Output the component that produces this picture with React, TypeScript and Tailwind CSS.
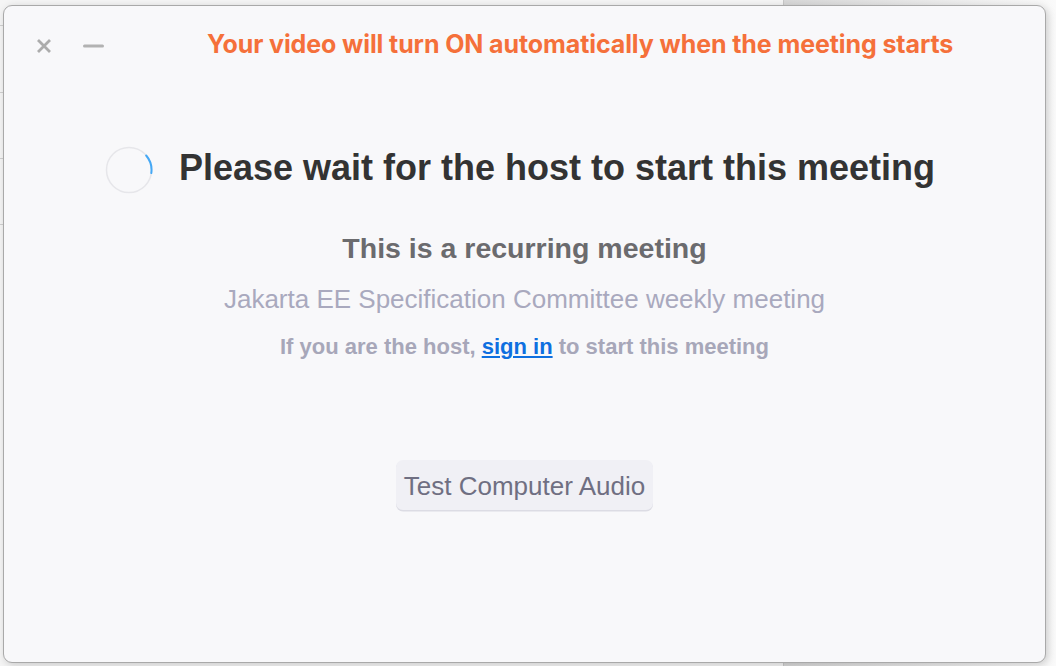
function Spinner() {
  return (
    <svg width="48" height="48" viewBox="0 0 48 48" className="mt-[4px] shrink-0">
      <circle cx="24" cy="24" r="22.5" fill="none" stroke="#e6e6ea" strokeWidth="1.5" />
      <path d="M 41.2 9.5 A 22.5 22.5 0 0 1 46.3 27.1" fill="none" stroke="#45a8f5" strokeWidth="2" strokeLinecap="round" />
    </svg>
  );
}

function CloseIcon() {
  return (
    <svg width="16" height="16" viewBox="0 0 16 16" className="shrink-0">
      <path d="M2 2 L14 14 M14 2 L2 14" stroke="#acacac" strokeWidth="2.8" strokeLinecap="butt" />
    </svg>
  );
}

function MinIcon() {
  return (
    <svg width="21" height="4" viewBox="0 0 21 4" className="shrink-0">
      <path d="M1.5 2 L19.5 2" stroke="#b2b2b2" strokeWidth="3" strokeLinecap="round" />
    </svg>
  );
}

export default function App() {
  return (
    <div className="relative h-[666px] w-[1056px] overflow-hidden bg-[#f4f4f4] font-['Liberation_Sans',Arial,sans-serif]">
      {/* desktop behind the window */}
      <div className="flex h-full">
        <div className="flex w-[784px] flex-col border-r border-[#c8c8c8] bg-[#f5f5f5]">
          <div className="h-[26px] border-b border-[#d0d0d0]" />
          <div className="h-[67px] border-b border-[#d0d0d0]" />
          <div className="h-[66px] border-b border-[#d0d0d0]" />
          <div className="h-[66px] border-b border-[#d0d0d0]" />
        </div>
        <div className="flex-1 bg-gradient-to-r from-[#d8d8d8] to-[#fafafa]" />
      </div>

      {/* meeting window */}
      <div className="absolute left-[3px] top-[5px] flex h-[658px] w-[1043px] flex-col rounded-[9px] border border-[#a9a9a9] bg-[#f8f8fa] shadow-[2px_2px_8px_rgba(0,0,0,0.18)]">
        <div className="mt-[26px] flex h-[25px] items-center pl-[32px]">
          <div className="flex items-center pt-[3px]">
            <CloseIcon />
            <div className="ml-[31px]">
              <MinIcon />
            </div>
          </div>
          <div className="ml-[103px] whitespace-nowrap font-['Inter',sans-serif] text-[25px] font-bold leading-none tracking-[-0.1px] text-[#f5703a]">
            Your video will turn ON automatically when the meeting starts
          </div>
        </div>

        <div className="mt-[85px] flex items-center justify-center gap-[26px] pr-[9px]">
          <Spinner />
          <h1 className="text-[36px] font-bold leading-none text-[#333333]">Please wait for the host to start this meeting</h1>
        </div>

        <div className="mt-[40px] text-center text-[28.5px] font-bold leading-none text-[#6b6b6e]">This is a recurring meeting</div>
        <div className="mt-[23.5px] text-center text-[26px] leading-none text-[#a9a9be]">Jakarta EE Specification Committee weekly meeting</div>
        <div className="mt-[24px] text-center text-[22px] font-bold leading-none text-[#a7a7b9]">
          If you are the host,{" "}
          <a href="#" className="text-[#0e6fe0] underline">
            sign in
          </a>{" "}
          to start this meeting
        </div>

        <div className="mt-[101.5px] flex justify-center">
          <button className="h-[50px] w-[257px] rounded-[7px] bg-[#f0f0f5] pt-[3px] text-[26px] leading-none text-[#6f6f82] shadow-[0_1.5px_0_#dcdce4]">
            Test Computer Audio
          </button>
        </div>
      </div>
    </div>
  );
}
